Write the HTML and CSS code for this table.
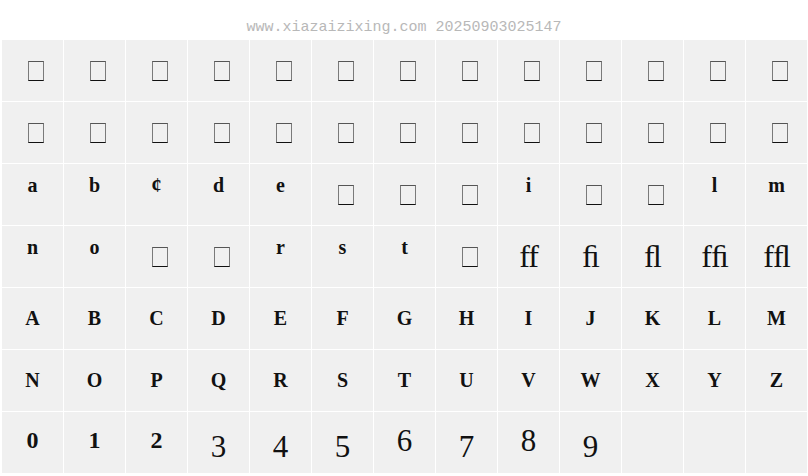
FILE: index.html
```html
<!DOCTYPE html>
<html lang="en">
<head>
<meta charset="utf-8">
<title>Font preview</title>
<link rel="stylesheet" href="styles.css">
</head>
<body>
<div class="stamp">www.xiazaizixing.com 20250903025147</div>
<div class="chart">
  <div class="cell box"><span class="tofu"></span></div>
  <div class="cell box"><span class="tofu"></span></div>
  <div class="cell box"><span class="tofu"></span></div>
  <div class="cell box"><span class="tofu"></span></div>
  <div class="cell box"><span class="tofu"></span></div>
  <div class="cell box"><span class="tofu"></span></div>
  <div class="cell box"><span class="tofu"></span></div>
  <div class="cell box"><span class="tofu"></span></div>
  <div class="cell box"><span class="tofu"></span></div>
  <div class="cell box"><span class="tofu"></span></div>
  <div class="cell box"><span class="tofu"></span></div>
  <div class="cell box"><span class="tofu"></span></div>
  <div class="cell box"><span class="tofu"></span></div>

  <div class="cell box"><span class="tofu"></span></div>
  <div class="cell box"><span class="tofu"></span></div>
  <div class="cell box"><span class="tofu"></span></div>
  <div class="cell box"><span class="tofu"></span></div>
  <div class="cell box"><span class="tofu"></span></div>
  <div class="cell box"><span class="tofu"></span></div>
  <div class="cell box"><span class="tofu"></span></div>
  <div class="cell box"><span class="tofu"></span></div>
  <div class="cell box"><span class="tofu"></span></div>
  <div class="cell box"><span class="tofu"></span></div>
  <div class="cell box"><span class="tofu"></span></div>
  <div class="cell box"><span class="tofu"></span></div>
  <div class="cell box"><span class="tofu"></span></div>

  <div class="cell lc">a</div>
  <div class="cell lc">b</div>
  <div class="cell lc">¢</div>
  <div class="cell lc">d</div>
  <div class="cell lc">e</div>
  <div class="cell box"><span class="tofu"></span></div>
  <div class="cell box"><span class="tofu"></span></div>
  <div class="cell box"><span class="tofu"></span></div>
  <div class="cell lc">i</div>
  <div class="cell box"><span class="tofu"></span></div>
  <div class="cell box"><span class="tofu"></span></div>
  <div class="cell lc">l</div>
  <div class="cell lc">m</div>

  <div class="cell lc">n</div>
  <div class="cell lc">o</div>
  <div class="cell box"><span class="tofu"></span></div>
  <div class="cell box"><span class="tofu"></span></div>
  <div class="cell lc">r</div>
  <div class="cell lc">s</div>
  <div class="cell lc">t</div>
  <div class="cell box"><span class="tofu"></span></div>
  <div class="cell lig">ff</div>
  <div class="cell lig">ﬁ</div>
  <div class="cell lig">ﬂ</div>
  <div class="cell lig">fﬁ</div>
  <div class="cell lig">fﬂ</div>

  <div class="cell uc">A</div>
  <div class="cell uc">B</div>
  <div class="cell uc">C</div>
  <div class="cell uc">D</div>
  <div class="cell uc">E</div>
  <div class="cell uc">F</div>
  <div class="cell uc">G</div>
  <div class="cell uc">H</div>
  <div class="cell uc">I</div>
  <div class="cell uc">J</div>
  <div class="cell uc">K</div>
  <div class="cell uc">L</div>
  <div class="cell uc">M</div>

  <div class="cell uc">N</div>
  <div class="cell uc">O</div>
  <div class="cell uc">P</div>
  <div class="cell uc">Q</div>
  <div class="cell uc">R</div>
  <div class="cell uc">S</div>
  <div class="cell uc">T</div>
  <div class="cell uc">U</div>
  <div class="cell uc">V</div>
  <div class="cell uc">W</div>
  <div class="cell uc">X</div>
  <div class="cell uc">Y</div>
  <div class="cell uc">Z</div>

  <div class="cell fig">0</div>
  <div class="cell fig">1</div>
  <div class="cell fig">2</div>
  <div class="cell old low">3</div>
  <div class="cell old low">4</div>
  <div class="cell old low">5</div>
  <div class="cell old">6</div>
  <div class="cell old low">7</div>
  <div class="cell old">8</div>
  <div class="cell old low">9</div>
  <div class="cell"></div>
  <div class="cell"></div>
  <div class="cell"></div>
</div>
</body>
</html>
```

FILE: styles.css
```css
html, body {
  margin: 0;
  padding: 0;
  background: #ffffff;
}

.stamp {
  height: 40px;
  box-sizing: border-box;
  padding-top: 19px;
  font-family: "Liberation Mono", monospace;
  font-size: 15px;
  line-height: 17px;
  color: #b8b8b8;
  text-align: center;
  white-space: pre;
}

.chart {
  margin-left: 2px;
  display: grid;
  grid-template-columns: repeat(13, 61px);
  grid-auto-rows: 61px;
  gap: 1px;
}

.cell {
  background: #f0f0f0;
  box-sizing: border-box;
  text-align: center;
  font-family: "Liberation Serif", "DejaVu Serif", serif;
  color: #111111;
  overflow: hidden;
}

.box {
  display: flex;
  align-items: center;
  justify-content: center;
}

.tofu {
  display: block;
  width: 16px;
  height: 20px;
  box-sizing: border-box;
  margin-left: 7px;
  border: 1px solid #7a7a7a;
  border-top-color: #555555;
  border-bottom-color: #111111;
}

.lc {
  font-weight: bold;
  font-size: 20px;
  line-height: 20px;
  padding-top: 11px;
}

.uc {
  font-weight: bold;
  font-size: 20px;
  line-height: 20px;
  padding-top: 20px;
}

.fig {
  font-weight: bold;
  font-size: 24px;
  line-height: 24px;
  padding-top: 16px;
}

.lig {
  font-size: 32px;
  line-height: 32px;
  padding-top: 14px;
  letter-spacing: -1px;
}

.old {
  font-size: 31px;
  line-height: 31px;
  padding-top: 13px;
}

.old.low {
  padding-top: 19px;
}
```
